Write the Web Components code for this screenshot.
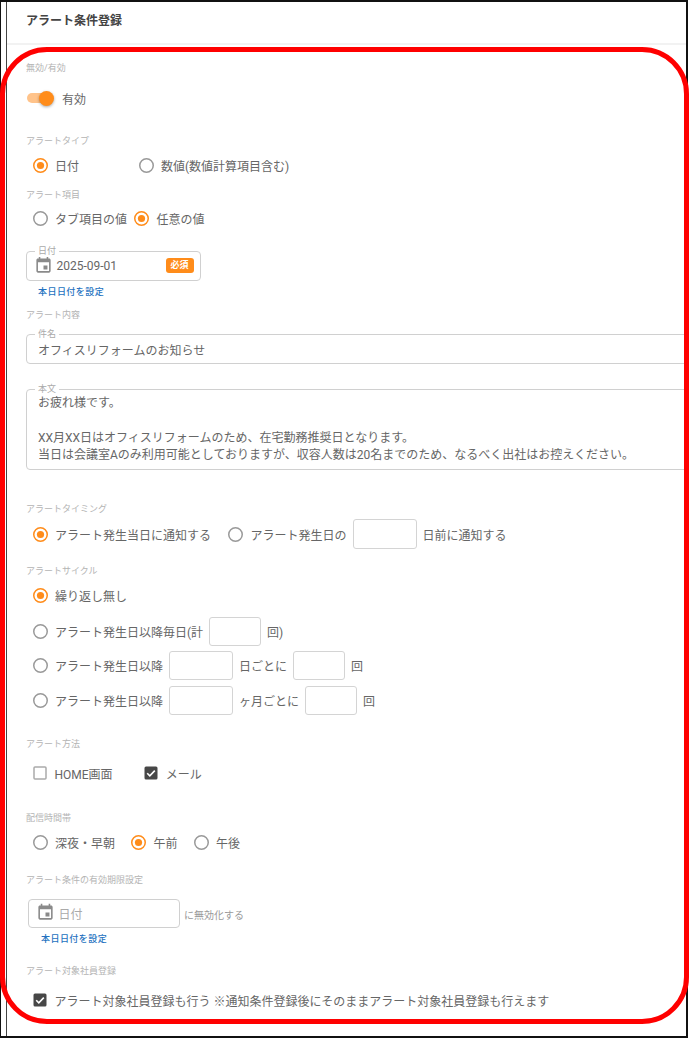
<!DOCTYPE html>
<html lang="ja">
<head>
<meta charset="utf-8">
<title>アラート条件登録</title>
<style>
  html, body { margin: 0; background: #fff; }
  body { font-family: Roboto, "Noto Sans CJK JP", sans-serif; font-size: 12px; color: #666; }
</style>
</head>
<body>
<alert-page>
  <span slot="title">アラート条件登録</span>

  <field-label style="margin-top:17px">無効/有効</field-label>
  <opt-row style="margin-top:9px"><toggle-switch>有効</toggle-switch></opt-row>

  <field-label style="margin-top:22px">アラートタイプ</field-label>
  <opt-row style="margin-top:3px">
    <radio-option checked style="width:100px">日付</radio-option>
    <radio-option>数値(数値計算項目含む)</radio-option>
  </opt-row>

  <field-label style="margin-top:9px">アラート項目</field-label>
  <opt-row style="margin-top:2px;gap:7px">
    <radio-option>タブ項目の値</radio-option>
    <radio-option checked>任意の値</radio-option>
  </opt-row>

  <outlined-field label="日付" style="margin-top:18px;width:175px">
    <calendar-icon></calendar-icon>
    <span>2025-09-01</span>
    <required-badge>必須</required-badge>
  </outlined-field>
  <text-link style="margin-top:5px;margin-left:12px">本日日付を設定</text-link>

  <field-label style="margin-top:11px">アラート内容</field-label>
  <outlined-field label="件名" style="margin-top:13px;width:700px;--pad:11px"><span>オフィスリフォームのお知らせ</span></outlined-field>
  <outlined-field label="本文" multiline style="margin-top:25px;width:700px;height:81px;--pad:11px">お疲れ様です。<br><br>XX月XX日はオフィスリフォームのため、在宅勤務推奨日となります。<br>当日は会議室Aのみ利用可能としておりますが、収容人数は20名までのため、なるべく出社はお控えください。</outlined-field>

  <field-label style="margin-top:33px">アラートタイミング</field-label>
  <opt-row style="margin-top:4px">
    <radio-option checked style="margin-right:11px">アラート発生当日に通知する</radio-option>
    <radio-option>アラート発生日の</radio-option>
    <mini-input></mini-input>
    日前に通知する
  </opt-row>

  <field-label style="margin-top:16px">アラートサイクル</field-label>
  <opt-row style="margin-top:3px"><radio-option checked>繰り返し無し</radio-option></opt-row>
  <opt-row style="margin-top:6px">
    <radio-option>アラート発生日以降毎日(計</radio-option>
    <mini-input style="width:52px;height:29px"></mini-input>
    回)
  </opt-row>
  <opt-row style="margin-top:5px;height:29px">
    <radio-option>アラート発生日以降</radio-option>
    <mini-input style="height:29px"></mini-input>
    日ごとに
    <mini-input style="width:52px;height:29px"></mini-input>
    回
  </opt-row>
  <opt-row style="margin-top:6px;height:29px">
    <radio-option>アラート発生日以降</radio-option>
    <mini-input style="height:29px"></mini-input>
    ヶ月ごとに
    <mini-input style="width:52px;height:29px"></mini-input>
    回
  </opt-row>

  <field-label style="margin-top:23px">アラート方法</field-label>
  <opt-row style="margin-top:8px;gap:31px">
    <check-option>HOME画面</check-option>
    <check-option checked>メール</check-option>
  </opt-row>

  <field-label style="margin-top:24px">配信時間帯</field-label>
  <opt-row style="margin-top:3px;gap:16px">
    <radio-option>深夜・早朝</radio-option>
    <radio-option checked>午前</radio-option>
    <radio-option>午後</radio-option>
  </opt-row>

  <field-label style="margin-top:17px">アラート条件の有効期限設定</field-label>
  <opt-row style="margin-top:13px;padding-left:2px;gap:4px;height:29px;font-size:10px">
    <outlined-field style="width:152px;height:29px;font-size:12px;color:#aaa">
      <calendar-icon></calendar-icon>
      <span>日付</span>
    </outlined-field>
    <span style="padding-top:2px;color:#999">に無効化する</span>
  </opt-row>
  <text-link style="margin-top:5px;margin-left:15px">本日日付を設定</text-link>

  <field-label style="margin-top:20px">アラート対象社員登録</field-label>
  <opt-row style="margin-top:8px">
    <check-option checked>アラート対象社員登録も行う ※通知条件登録後にそのままアラート対象社員登録も行えます</check-option>
  </opt-row>
</alert-page>

<script>
const ORANGE = "#ff8c1a";

class AlertPage extends HTMLElement {
  constructor() {
    super();
    this.attachShadow({ mode: "open" });
    this.shadowRoot.innerHTML = `
      <style>
        :host {
          display: block;
          position: relative;
          box-sizing: border-box;
          width: 688px;
          height: 1038px;
          padding-left: 5px;
          border: solid #111;
          border-width: 2px 2px 2px 1px;
          overflow: hidden;
        }
        #inner {
          height: 100%;
          border-left: 1px solid #444;
          overflow: hidden;
        }
        header {
          box-sizing: border-box;
          height: 43px;
          padding: 12px 0 0 19px;
          line-height: 15px;
          font-weight: 700;
          color: #444;
          border-bottom: 2px solid #f2f2f2;
        }
        main { padding-left: 19px; }
      </style>
      <div id="inner">
        <header><slot name="title"></slot></header>
        <main><slot></slot></main>
      </div>
    `;
  }
}

// red marker that sits over the screenshot
class HighlightFrame extends HTMLElement {
  constructor() {
    super();
    this.attachShadow({ mode: "open" });
    this.shadowRoot.innerHTML = `
      <style>
        :host {
          position: absolute;
          left: 0;
          top: 47px;
          box-sizing: border-box;
          width: 689px;
          height: 977px;
          border: 5px solid #f00;
          border-radius: 47px;
          pointer-events: none;
        }
      </style>
    `;
  }
}

class FieldLabel extends HTMLElement {
  constructor() {
    super();
    this.attachShadow({ mode: "open" });
    this.shadowRoot.innerHTML = `
      <style>
        :host {
          display: block;
          height: 12px;
          line-height: 12px;
          font-size: 9px;
          color: #b4b4b4;
          white-space: nowrap;
        }
      </style>
      <slot></slot>
    `;
  }
}

class OptRow extends HTMLElement {
  constructor() {
    super();
    this.attachShadow({ mode: "open" });
    this.shadowRoot.innerHTML = `
      <style>
        :host {
          display: flex;
          align-items: center;
          gap: 6px;
          height: 30px;
          padding-left: 6.5px;
          white-space: nowrap;
        }
      </style>
      <slot></slot>
    `;
  }
}

class RadioOption extends HTMLElement {
  constructor() {
    super();
    this.attachShadow({ mode: "open" });
    const on = this.hasAttribute("checked");
    this.shadowRoot.innerHTML = `
      <style>
        :host {
          display: inline-flex;
          align-items: center;
          gap: 7.5px;
          white-space: nowrap;
        }
        svg { flex: none; display: block; }
      </style>
      <svg width="15" height="15" viewBox="0 0 15 15">
        <circle cx="7.5" cy="7.5" r="6.75" fill="none" stroke-width="1.5" stroke="${on ? ORANGE : "#999"}"></circle>
        ${on ? `<circle cx="7.5" cy="7.5" r="3.6" fill="${ORANGE}"></circle>` : ""}
      </svg>
      <slot></slot>
    `;
  }
}

class CheckOption extends HTMLElement {
  constructor() {
    super();
    this.attachShadow({ mode: "open" });
    const on = this.hasAttribute("checked");
    this.shadowRoot.innerHTML = `
      <style>
        :host {
          display: inline-flex;
          align-items: center;
          gap: 8px;
          white-space: nowrap;
        }
        svg { flex: none; display: block; }
      </style>
      <svg width="14" height="14" viewBox="0 0 14 14">
        ${on
          ? `<rect x="0.5" y="0.5" width="13" height="13" rx="1.5" fill="#474747"></rect>
             <path d="M3.2 7.2l2.6 2.6 5-5.2" fill="none" stroke="#fff" stroke-width="1.6"></path>`
          : `<rect x="1" y="1" width="12" height="12" rx="1" fill="none" stroke="#aaa" stroke-width="1.5"></rect>`}
      </svg>
      <slot></slot>
    `;
  }
}

class ToggleSwitch extends HTMLElement {
  constructor() {
    super();
    this.attachShadow({ mode: "open" });
    this.shadowRoot.innerHTML = `
      <style>
        :host {
          display: inline-flex;
          align-items: center;
          gap: 9px;
          margin-left: -5.5px;
        }
        #track {
          position: relative;
          width: 26px;
          height: 10px;
          border-radius: 5px;
          background: #ffc38a;
        }
        #thumb {
          position: absolute;
          right: -1px;
          top: -2.5px;
          width: 15px;
          height: 15px;
          border-radius: 50%;
          background: ${ORANGE};
          box-shadow: 0 1px 3px rgba(0, 0, 0, 0.35);
        }
      </style>
      <div id="track"><div id="thumb"></div></div>
      <slot></slot>
    `;
  }
}

class OutlinedField extends HTMLElement {
  constructor() {
    super();
    this.attachShadow({ mode: "open" });
    const label = this.getAttribute("label");
    const multi = this.hasAttribute("multiline");
    this.shadowRoot.innerHTML = `
      <style>
        :host {
          display: flex;
          position: relative;
          box-sizing: border-box;
          height: 30px;
          align-items: ${multi ? "flex-start" : "center"};
          gap: 3.5px;
          padding: ${multi ? "5px" : "0"} 0 0 var(--pad, 7px);
          border: 1.5px solid #d0d0d0;
          border-radius: 4px;
          line-height: ${multi ? "17.4px" : "normal"};
          white-space: nowrap;
          background: #fff;
        }
        #legend {
          position: absolute;
          left: 8px;
          top: -7px;
          padding: 0 3px;
          line-height: 12px;
          font-size: 9px;
          color: #aaa;
          background: #fff;
        }
        #body { display: block; }
      </style>
      ${label ? `<span id="legend">${label}</span>` : ""}
      ${multi ? `<span id="body"><slot></slot></span>` : `<slot></slot>`}
    `;
  }
}

class MiniInput extends HTMLElement {
  constructor() {
    super();
    this.attachShadow({ mode: "open" });
    this.shadowRoot.innerHTML = `
      <style>
        :host {
          display: block;
          flex: none;
          box-sizing: border-box;
          width: 64px;
          height: 30px;
          border: 1.5px solid #d4d4d4;
          border-radius: 3px;
        }
      </style>
    `;
  }
}

class CalendarIcon extends HTMLElement {
  constructor() {
    super();
    this.attachShadow({ mode: "open" });
    this.shadowRoot.innerHTML = `
      <style>
        :host { display: block; flex: none; width: 19px; height: 19px; margin-top: -2px; }
        svg { display: block; }
      </style>
      <svg width="19" height="19" viewBox="0 0 24 24" fill="#8a8a8a">
        <path d="M17 12h-5v5h5v-5zM16 1v2H8V1H6v2H5c-1.11 0-1.99.9-1.99 2L3 19c0 1.1.89 2 2 2h14c1.1 0 2-.9 2-2V5c0-1.1-.9-2-2-2h-1V1h-2zm3 18H5V8h14v11z"></path>
      </svg>
    `;
  }
}

class RequiredBadge extends HTMLElement {
  constructor() {
    super();
    this.attachShadow({ mode: "open" });
    this.shadowRoot.innerHTML = `
      <style>
        :host {
          display: block;
          position: absolute;
          right: 6.5px;
          top: 6px;
          width: 28px;
          height: 15px;
          line-height: 15px;
          text-align: center;
          font-size: 9px;
          font-weight: 700;
          color: #fff;
          background: ${ORANGE};
          border-radius: 3px;
        }
      </style>
      <slot></slot>
    `;
  }
}

class TextLink extends HTMLElement {
  constructor() {
    super();
    this.attachShadow({ mode: "open" });
    this.shadowRoot.innerHTML = `
      <style>
        :host {
          display: block;
          height: 12px;
          line-height: 12px;
          font-size: 9px;
          font-weight: 500;
          letter-spacing: 0.45px;
          color: #2472c0;
          white-space: nowrap;
        }
      </style>
      <slot></slot>
    `;
  }
}

customElements.define("alert-page", AlertPage);
customElements.define("highlight-frame", HighlightFrame);
customElements.define("field-label", FieldLabel);
customElements.define("opt-row", OptRow);
customElements.define("radio-option", RadioOption);
customElements.define("check-option", CheckOption);
customElements.define("toggle-switch", ToggleSwitch);
customElements.define("outlined-field", OutlinedField);
customElements.define("mini-input", MiniInput);
customElements.define("calendar-icon", CalendarIcon);
customElements.define("required-badge", RequiredBadge);
customElements.define("text-link", TextLink);

document.body.appendChild(document.createElement("highlight-frame"));
</script>
</body>
</html>
